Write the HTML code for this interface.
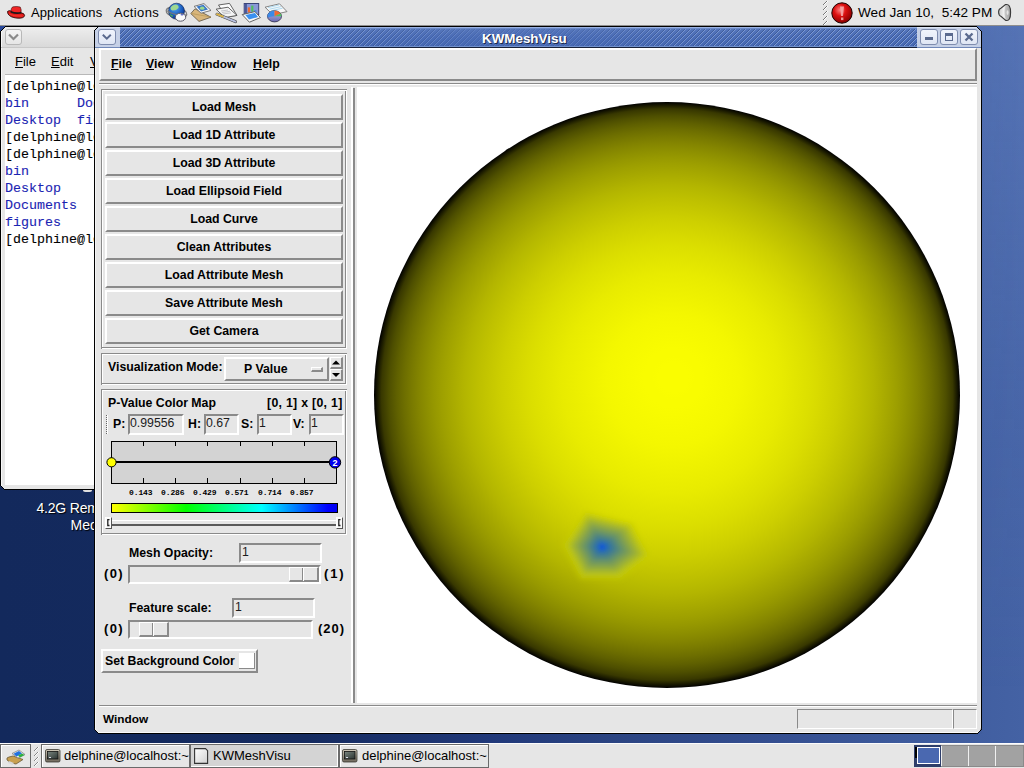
<!DOCTYPE html>
<html><head><meta charset="utf-8">
<style>
*{box-sizing:border-box;margin:0;padding:0}
html,body{width:1024px;height:768px;overflow:hidden}
body{position:relative;font-family:"Liberation Sans",sans-serif;background:#13295c}
.a{position:absolute}
.t{position:absolute;white-space:nowrap;line-height:1}
</style></head><body>
<div class="a" style="left:0;top:0;width:1024px;height:768px;background:linear-gradient(90deg,#13295c 0%,#152b60 30%,#21397a 48%,#2b4482 60%,#344e90 75%,#3d5a9c 88%,#4462a4 100%)"></div>
<div class="a" style="left:0;top:0;width:1024px;height:768px;background:linear-gradient(180deg,rgba(120,150,215,0.35) 0%,rgba(110,140,210,0.12) 50%,rgba(0,0,40,0.0) 90%);-webkit-mask-image:linear-gradient(90deg,transparent 45%,#000 100%);mask-image:linear-gradient(90deg,transparent 45%,#000 100%)"></div>
<div class="t" style="left:36.5px;top:499.5px;font:normal 14px 'Liberation Sans',sans-serif;color:#fff;text-shadow:1px 1px 1px #000;letter-spacing:-0.2px">4.2G Removable</div>
<div class="t" style="left:70.5px;top:516.5px;font:normal 14px 'Liberation Sans',sans-serif;color:#fff;text-shadow:1px 1px 1px #000;letter-spacing:0px">Media</div>
<div class="a" style="left:83px;top:489px;width:9px;height:3px;border-radius:50%;background:#e0e0e0"></div>
<div class="a" style="left:0px;top:26px;width:221px;height:464px;background:#e6e6e6;border:1px solid #000"></div>
<div class="a" style="left:1px;top:27px;width:220px;height:20px;background:linear-gradient(#eeeeee,#d9d9d9)"></div>
<div class="a" style="left:1px;top:27px;width:1px;height:462px;background:#f8f8f8"></div>
<div class="a" style="left:1px;top:47px;width:220px;height:1px;background:#c8c8c8"></div>
<div class="a" style="left:5px;top:29px;width:17px;height:16px;border:1px solid #b8b8b8;border-radius:3px;background:linear-gradient(#f4f4f4,#e6e6e6)"></div>
<svg class="a" style="left:8px;top:33px" width="11" height="8"><path d="M1 1.5 L5.5 6 L10 1.5" stroke="#8a8a8a" stroke-width="2.2" fill="none"/></svg>
<div class="t" style="left:15px;top:54px;font:normal 13px 'Liberation Sans',sans-serif;color:#000;"><u>F</u>ile</div>
<div class="t" style="left:51px;top:54px;font:normal 13px 'Liberation Sans',sans-serif;color:#000;"><u>E</u>dit</div>
<div class="t" style="left:90px;top:54px;font:normal 13px 'Liberation Sans',sans-serif;color:#000;"><u>V</u>iew</div>
<div class="a" style="left:5px;top:74px;width:216px;height:1px;background:#b8b8b8"></div>
<div class="a" style="left:0px;top:26px;width:1px;height:1px;background:#28489a"></div><div class="a" style="left:1px;top:26px;width:1px;height:1px;background:#28489a"></div><div class="a" style="left:2px;top:26px;width:1px;height:1px;background:#28489a"></div><div class="a" style="left:3px;top:26px;width:1px;height:1px;background:#28489a"></div><div class="a" style="left:4px;top:26px;width:1px;height:1px;background:#28489a"></div><div class="a" style="left:5px;top:26px;width:1px;height:1px;background:#000"></div><div class="a" style="left:0px;top:27px;width:1px;height:1px;background:#28489a"></div><div class="a" style="left:1px;top:27px;width:1px;height:1px;background:#28489a"></div><div class="a" style="left:2px;top:27px;width:1px;height:1px;background:#28489a"></div><div class="a" style="left:3px;top:27px;width:1px;height:1px;background:#28489a"></div><div class="a" style="left:4px;top:27px;width:1px;height:1px;background:#000"></div><div class="a" style="left:0px;top:28px;width:1px;height:1px;background:#28489a"></div><div class="a" style="left:1px;top:28px;width:1px;height:1px;background:#28489a"></div><div class="a" style="left:2px;top:28px;width:1px;height:1px;background:#28489a"></div><div class="a" style="left:3px;top:28px;width:1px;height:1px;background:#000"></div><div class="a" style="left:0px;top:29px;width:1px;height:1px;background:#28489a"></div><div class="a" style="left:1px;top:29px;width:1px;height:1px;background:#28489a"></div><div class="a" style="left:2px;top:29px;width:1px;height:1px;background:#000"></div><div class="a" style="left:0px;top:30px;width:1px;height:1px;background:#28489a"></div><div class="a" style="left:1px;top:30px;width:1px;height:1px;background:#000"></div><div class="a" style="left:0px;top:31px;width:1px;height:1px;background:#000"></div>
<div class="a" style="left:0px;top:489px;width:1px;height:1px;background:#13295c"></div><div class="a" style="left:1px;top:489px;width:1px;height:1px;background:#13295c"></div><div class="a" style="left:2px;top:489px;width:1px;height:1px;background:#13295c"></div><div class="a" style="left:3px;top:489px;width:1px;height:1px;background:#13295c"></div><div class="a" style="left:4px;top:489px;width:1px;height:1px;background:#000"></div><div class="a" style="left:0px;top:488px;width:1px;height:1px;background:#13295c"></div><div class="a" style="left:1px;top:488px;width:1px;height:1px;background:#13295c"></div><div class="a" style="left:2px;top:488px;width:1px;height:1px;background:#13295c"></div><div class="a" style="left:3px;top:488px;width:1px;height:1px;background:#000"></div><div class="a" style="left:0px;top:487px;width:1px;height:1px;background:#13295c"></div><div class="a" style="left:1px;top:487px;width:1px;height:1px;background:#13295c"></div><div class="a" style="left:2px;top:487px;width:1px;height:1px;background:#000"></div><div class="a" style="left:0px;top:486px;width:1px;height:1px;background:#13295c"></div><div class="a" style="left:1px;top:486px;width:1px;height:1px;background:#000"></div><div class="a" style="left:0px;top:485px;width:1px;height:1px;background:#000"></div>
<div class="a" style="left:5px;top:75px;width:216px;height:410px;background:#fff"></div>
<div class="a" style="left:5px;top:78px;font:13.33px 'Liberation Mono',monospace;line-height:17px;color:#000;white-space:pre;-webkit-text-stroke:0.1px currentColor">[delphine@localhost ~]$ ls
<span style="color:#1a24b2">bin</span>      <span style="color:#1a24b2">Documents</span>
<span style="color:#1a24b2">Desktop</span>  <span style="color:#1a24b2">figures</span>
[delphine@localhost ~]$ clear
[delphine@localhost ~]$ ls -1
<span style="color:#1a24b2">bin</span>
<span style="color:#1a24b2">Desktop</span>
<span style="color:#1a24b2">Documents</span>
<span style="color:#1a24b2">figures</span>
[delphine@localhost ~]$ </div>
<div class="a" style="left:94px;top:26px;width:888px;height:708px;background:#e6e6e6;border:1px solid #000;border-radius:6px 6px 6px 6px"></div>
<div class="a" style="left:95px;top:27px;width:886px;height:706px;border-left:1px solid #f4f4f4;border-radius:5px 5px 4px 4px;border-bottom:1px solid #fafafa"></div>
<div class="a" style="left:95px;top:27px;width:886px;height:21px;background:linear-gradient(#5878bc,#4a6cb6 50%,#4668b2);border-radius:5px 5px 0 0;overflow:hidden"></div>
<svg class="a" style="left:120px;top:29px" width="797" height="17" shape-rendering="crispEdges"><defs><pattern id="st" width="5" height="5" patternUnits="userSpaceOnUse"><rect x="4" y="0" width="1" height="1" fill="#3b5896"/><rect x="3" y="1" width="1" height="1" fill="#3b5896"/><rect x="2" y="2" width="1" height="1" fill="#3b5896"/><rect x="1" y="3" width="1" height="1" fill="#3b5896"/><rect x="0" y="4" width="1" height="1" fill="#3b5896"/><rect x="0" y="0" width="1" height="1" fill="#7f9cd6"/><rect x="4" y="1" width="1" height="1" fill="#7f9cd6"/><rect x="3" y="2" width="1" height="1" fill="#7f9cd6"/><rect x="2" y="3" width="1" height="1" fill="#7f9cd6"/><rect x="1" y="4" width="1" height="1" fill="#7f9cd6"/></pattern><linearGradient id="stm" x1="0" x2="1" y1="0" y2="0"><stop offset="0" stop-color="#fff" stop-opacity="1"/><stop offset="0.3" stop-color="#fff" stop-opacity="0.8"/><stop offset="0.45" stop-color="#fff" stop-opacity="0.3"/><stop offset="0.55" stop-color="#fff" stop-opacity="0.3"/><stop offset="0.7" stop-color="#fff" stop-opacity="0.8"/><stop offset="1" stop-color="#fff" stop-opacity="1"/></linearGradient><mask id="mk"><rect width="797" height="18" fill="url(#stm)"/></mask></defs><rect width="797" height="18" fill="url(#st)" mask="url(#mk)"/></svg>
<div class="a" style="left:95px;top:27px;width:886px;height:1px;background:#9ab2e4;border-radius:5px 5px 0 0"></div>
<div class="a" style="left:95px;top:28px;width:886px;height:1px;background:#6a8ac8"></div>
<div class="a" style="left:120px;top:46px;width:797px;height:1px;background:#7090cc"></div>
<div class="a" style="left:95px;top:47px;width:886px;height:1px;background:#18223a"></div>
<div class="a" style="left:95px;top:27px;width:25px;height:20px;background:#c5d0e6;border-radius:5px 0 0 0;border-top:1px solid #dde6f6"></div>
<div class="a" style="left:95px;top:47px;width:25px;height:1px;background:#7088b8"></div>
<div class="a" style="left:98px;top:29px;width:18px;height:16px;border:1px solid #7e8cae;border-radius:3px;background:linear-gradient(#f0f4fc,#dfe6f4)"></div>
<svg class="a" style="left:101px;top:33px" width="12" height="8"><path d="M1.8 1.8 L5.8 5.6 L9.8 1.8" stroke="#5a6a8e" stroke-width="2" fill="none"/></svg>
<div class="a" style="left:917px;top:27px;width:64px;height:20px;background:#c5d0e6;border-radius:0 5px 0 0;border-top:1px solid #dde6f6"></div>
<div class="a" style="left:917px;top:47px;width:64px;height:1px;background:#7088b8"></div>
<div class="a" style="left:920px;top:29px;width:18px;height:16px;border:1px solid #7e8cae;border-radius:3px;background:linear-gradient(#f0f4fc,#dfe6f4)"></div>
<div class="a" style="left:940px;top:29px;width:18px;height:16px;border:1px solid #7e8cae;border-radius:3px;background:linear-gradient(#f0f4fc,#dfe6f4)"></div>
<div class="a" style="left:960px;top:29px;width:18px;height:16px;border:1px solid #7e8cae;border-radius:3px;background:linear-gradient(#f0f4fc,#dfe6f4)"></div>
<div class="a" style="left:925px;top:37px;width:8px;height:3px;background:#5a6a8e"></div>
<div class="a" style="left:945px;top:33px;width:8px;height:8px;border:1px solid #5a6a8e;border-top:3px solid #5a6a8e"></div>
<svg class="a" style="left:964px;top:32px" width="10" height="10"><path d="M1.5 1.5 L8.5 8.5 M8.5 1.5 L1.5 8.5" stroke="#5a6a8e" stroke-width="2.3" fill="none"/></svg>
<div class="t" style="left:482px;top:31px;font:bold 13.4px 'Liberation Sans',sans-serif;color:#fff;text-shadow:1px 1px 0 #1e2a48">KWMeshVisu</div>
<div class="a" style="left:94px;top:26px;width:1px;height:1px;background:#000"></div><div class="a" style="left:95px;top:26px;width:1px;height:1px;background:#000"></div><div class="a" style="left:96px;top:26px;width:1px;height:1px;background:#000"></div><div class="a" style="left:97px;top:26px;width:1px;height:1px;background:#000"></div><div class="a" style="left:98px;top:26px;width:1px;height:1px;background:#000"></div><div class="a" style="left:94px;top:27px;width:1px;height:1px;background:#e6e6e6"></div><div class="a" style="left:95px;top:27px;width:1px;height:1px;background:#e6e6e6"></div><div class="a" style="left:96px;top:27px;width:1px;height:1px;background:#e6e6e6"></div><div class="a" style="left:97px;top:27px;width:1px;height:1px;background:#000"></div><div class="a" style="left:94px;top:28px;width:1px;height:1px;background:#e6e6e6"></div><div class="a" style="left:95px;top:28px;width:1px;height:1px;background:#e6e6e6"></div><div class="a" style="left:96px;top:28px;width:1px;height:1px;background:#000"></div><div class="a" style="left:94px;top:29px;width:1px;height:1px;background:#e6e6e6"></div><div class="a" style="left:95px;top:29px;width:1px;height:1px;background:#000"></div><div class="a" style="left:94px;top:30px;width:1px;height:1px;background:#000"></div>
<div class="a" style="left:981px;top:26px;width:1px;height:1px;background:#5070b1"></div><div class="a" style="left:980px;top:26px;width:1px;height:1px;background:#5070b1"></div><div class="a" style="left:979px;top:26px;width:1px;height:1px;background:#5070b1"></div><div class="a" style="left:978px;top:26px;width:1px;height:1px;background:#5070b1"></div><div class="a" style="left:977px;top:26px;width:1px;height:1px;background:#5070b1"></div><div class="a" style="left:976px;top:26px;width:1px;height:1px;background:#000"></div><div class="a" style="left:981px;top:27px;width:1px;height:1px;background:#5070b1"></div><div class="a" style="left:980px;top:27px;width:1px;height:1px;background:#5070b1"></div><div class="a" style="left:979px;top:27px;width:1px;height:1px;background:#5070b1"></div><div class="a" style="left:978px;top:27px;width:1px;height:1px;background:#5070b1"></div><div class="a" style="left:977px;top:27px;width:1px;height:1px;background:#000"></div><div class="a" style="left:981px;top:28px;width:1px;height:1px;background:#5070b1"></div><div class="a" style="left:980px;top:28px;width:1px;height:1px;background:#5070b1"></div><div class="a" style="left:979px;top:28px;width:1px;height:1px;background:#5070b1"></div><div class="a" style="left:978px;top:28px;width:1px;height:1px;background:#000"></div><div class="a" style="left:981px;top:29px;width:1px;height:1px;background:#5070b1"></div><div class="a" style="left:980px;top:29px;width:1px;height:1px;background:#5070b1"></div><div class="a" style="left:979px;top:29px;width:1px;height:1px;background:#000"></div><div class="a" style="left:981px;top:30px;width:1px;height:1px;background:#5070b1"></div><div class="a" style="left:980px;top:30px;width:1px;height:1px;background:#000"></div><div class="a" style="left:981px;top:31px;width:1px;height:1px;background:#000"></div>
<div class="a" style="left:94px;top:733px;width:1px;height:1px;background:#13295c"></div><div class="a" style="left:95px;top:733px;width:1px;height:1px;background:#13295c"></div><div class="a" style="left:96px;top:733px;width:1px;height:1px;background:#13295c"></div><div class="a" style="left:97px;top:733px;width:1px;height:1px;background:#13295c"></div><div class="a" style="left:98px;top:733px;width:1px;height:1px;background:#000"></div><div class="a" style="left:94px;top:732px;width:1px;height:1px;background:#13295c"></div><div class="a" style="left:95px;top:732px;width:1px;height:1px;background:#13295c"></div><div class="a" style="left:96px;top:732px;width:1px;height:1px;background:#13295c"></div><div class="a" style="left:97px;top:732px;width:1px;height:1px;background:#000"></div><div class="a" style="left:94px;top:731px;width:1px;height:1px;background:#13295c"></div><div class="a" style="left:95px;top:731px;width:1px;height:1px;background:#13295c"></div><div class="a" style="left:96px;top:731px;width:1px;height:1px;background:#000"></div><div class="a" style="left:94px;top:730px;width:1px;height:1px;background:#13295c"></div><div class="a" style="left:95px;top:730px;width:1px;height:1px;background:#000"></div><div class="a" style="left:94px;top:729px;width:1px;height:1px;background:#000"></div>
<div class="a" style="left:981px;top:733px;width:1px;height:1px;background:#405d9e"></div><div class="a" style="left:980px;top:733px;width:1px;height:1px;background:#405d9e"></div><div class="a" style="left:979px;top:733px;width:1px;height:1px;background:#405d9e"></div><div class="a" style="left:978px;top:733px;width:1px;height:1px;background:#405d9e"></div><div class="a" style="left:977px;top:733px;width:1px;height:1px;background:#000"></div><div class="a" style="left:981px;top:732px;width:1px;height:1px;background:#405d9e"></div><div class="a" style="left:980px;top:732px;width:1px;height:1px;background:#405d9e"></div><div class="a" style="left:979px;top:732px;width:1px;height:1px;background:#405d9e"></div><div class="a" style="left:978px;top:732px;width:1px;height:1px;background:#000"></div><div class="a" style="left:981px;top:731px;width:1px;height:1px;background:#405d9e"></div><div class="a" style="left:980px;top:731px;width:1px;height:1px;background:#405d9e"></div><div class="a" style="left:979px;top:731px;width:1px;height:1px;background:#000"></div><div class="a" style="left:981px;top:730px;width:1px;height:1px;background:#405d9e"></div><div class="a" style="left:980px;top:730px;width:1px;height:1px;background:#000"></div><div class="a" style="left:981px;top:729px;width:1px;height:1px;background:#000"></div>
<div class="a" style="left:99px;top:48px;width:878px;height:33px;border-style:solid;border-width:2px;border-color:#ffffff #8a8a8a #8a8a8a #ffffff"></div>
<div class="t" style="left:111px;top:57px;font:bold 12.3px 'Liberation Sans',sans-serif;color:#000;"><u>F</u>ile</div>
<div class="t" style="left:146px;top:57px;font:bold 12.3px 'Liberation Sans',sans-serif;color:#000;"><u>V</u>iew</div>
<div class="t" style="left:191px;top:57px;font:bold 11.8px 'Liberation Sans',sans-serif;color:#000;"><u>W</u>indow</div>
<div class="t" style="left:253px;top:57px;font:bold 12.3px 'Liberation Sans',sans-serif;color:#000;"><u>H</u>elp</div>
<div class="a" style="left:99px;top:83px;width:878px;height:1px;background:#8a8a8a"></div>
<div class="a" style="left:99px;top:84px;width:878px;height:1px;background:#ffffff"></div>
<div class="a" style="left:101px;top:89px;width:246px;height:1px;background:#8a8a8a"></div>
<div class="a" style="left:101px;top:89px;width:1px;height:260px;background:#8a8a8a"></div>
<div class="a" style="left:102px;top:90px;width:244px;height:1px;background:#ffffff"></div>
<div class="a" style="left:102px;top:90px;width:1px;height:258px;background:#ffffff"></div>
<div class="a" style="left:345px;top:91px;width:1px;height:257px;background:#8a8a8a"></div>
<div class="a" style="left:102px;top:347px;width:244px;height:1px;background:#8a8a8a"></div>
<div class="a" style="left:346px;top:90px;width:1px;height:259px;background:#ffffff"></div>
<div class="a" style="left:102px;top:348px;width:245px;height:1px;background:#ffffff"></div>
<div class="a" style="left:105px;top:94px;width:238px;height:26px;background:#e6e6e6;border-style:solid;border-width:2px;border-color:#ffffff #8a8a8a #8a8a8a #ffffff;"></div>
<div class="t" style="left:105px;top:100px;width:238px;text-align:center;font:bold 12.3px 'Liberation Sans',sans-serif;color:#000">Load Mesh</div>
<div class="a" style="left:105px;top:122px;width:238px;height:26px;background:#e6e6e6;border-style:solid;border-width:2px;border-color:#ffffff #8a8a8a #8a8a8a #ffffff;"></div>
<div class="t" style="left:105px;top:128px;width:238px;text-align:center;font:bold 12.3px 'Liberation Sans',sans-serif;color:#000">Load 1D Attribute</div>
<div class="a" style="left:105px;top:150px;width:238px;height:26px;background:#e6e6e6;border-style:solid;border-width:2px;border-color:#ffffff #8a8a8a #8a8a8a #ffffff;"></div>
<div class="t" style="left:105px;top:156px;width:238px;text-align:center;font:bold 12.3px 'Liberation Sans',sans-serif;color:#000">Load 3D Attribute</div>
<div class="a" style="left:105px;top:178px;width:238px;height:26px;background:#e6e6e6;border-style:solid;border-width:2px;border-color:#ffffff #8a8a8a #8a8a8a #ffffff;"></div>
<div class="t" style="left:105px;top:184px;width:238px;text-align:center;font:bold 12.3px 'Liberation Sans',sans-serif;color:#000">Load Ellipsoid Field</div>
<div class="a" style="left:105px;top:206px;width:238px;height:26px;background:#e6e6e6;border-style:solid;border-width:2px;border-color:#ffffff #8a8a8a #8a8a8a #ffffff;"></div>
<div class="t" style="left:105px;top:212px;width:238px;text-align:center;font:bold 12.3px 'Liberation Sans',sans-serif;color:#000">Load Curve</div>
<div class="a" style="left:105px;top:234px;width:238px;height:26px;background:#e6e6e6;border-style:solid;border-width:2px;border-color:#ffffff #8a8a8a #8a8a8a #ffffff;"></div>
<div class="t" style="left:105px;top:240px;width:238px;text-align:center;font:bold 12.3px 'Liberation Sans',sans-serif;color:#000">Clean Attributes</div>
<div class="a" style="left:105px;top:262px;width:238px;height:26px;background:#e6e6e6;border-style:solid;border-width:2px;border-color:#ffffff #8a8a8a #8a8a8a #ffffff;"></div>
<div class="t" style="left:105px;top:268px;width:238px;text-align:center;font:bold 12.3px 'Liberation Sans',sans-serif;color:#000">Load Attribute Mesh</div>
<div class="a" style="left:105px;top:290px;width:238px;height:26px;background:#e6e6e6;border-style:solid;border-width:2px;border-color:#ffffff #8a8a8a #8a8a8a #ffffff;"></div>
<div class="t" style="left:105px;top:296px;width:238px;text-align:center;font:bold 12.3px 'Liberation Sans',sans-serif;color:#000">Save Attribute Mesh</div>
<div class="a" style="left:105px;top:318px;width:238px;height:26px;background:#e6e6e6;border-style:solid;border-width:2px;border-color:#ffffff #8a8a8a #8a8a8a #ffffff;"></div>
<div class="t" style="left:105px;top:324px;width:238px;text-align:center;font:bold 12.3px 'Liberation Sans',sans-serif;color:#000">Get Camera</div>
<div class="a" style="left:101px;top:353px;width:246px;height:1px;background:#8a8a8a"></div>
<div class="a" style="left:101px;top:353px;width:1px;height:32px;background:#8a8a8a"></div>
<div class="a" style="left:102px;top:354px;width:244px;height:1px;background:#ffffff"></div>
<div class="a" style="left:102px;top:354px;width:1px;height:30px;background:#ffffff"></div>
<div class="a" style="left:345px;top:355px;width:1px;height:29px;background:#8a8a8a"></div>
<div class="a" style="left:102px;top:383px;width:244px;height:1px;background:#8a8a8a"></div>
<div class="a" style="left:346px;top:354px;width:1px;height:31px;background:#ffffff"></div>
<div class="a" style="left:102px;top:384px;width:245px;height:1px;background:#ffffff"></div>
<div class="t" style="left:108px;top:360px;font:bold 12.3px 'Liberation Sans',sans-serif;color:#000;">Visualization Mode:</div>
<div class="a" style="left:224px;top:357px;width:105px;height:24px;background:#e6e6e6;border-style:solid;border-width:2px;border-color:#ffffff #8a8a8a #8a8a8a #ffffff;"></div>
<div class="t" style="left:244px;top:362px;font:bold 12.3px 'Liberation Sans',sans-serif;color:#000;">P Value</div>
<div class="a" style="left:311px;top:367px;width:12px;height:5px;background:#e6e6e6;border-style:solid;border-width:1px 2px 2px 1px;border-color:#ffffff #8a8a8a #8a8a8a #ffffff"></div>
<div class="a" style="left:330px;top:357px;width:13px;height:12px;background:#e6e6e6;border-style:solid;border-width:1px 2px 2px 1px;border-color:#ffffff #8a8a8a #8a8a8a #ffffff"></div>
<div class="a" style="left:330px;top:369px;width:13px;height:12px;background:#e6e6e6;border-style:solid;border-width:1px 2px 2px 1px;border-color:#ffffff #8a8a8a #8a8a8a #ffffff"></div>
<svg class="a" style="left:330px;top:357px" width="14" height="24"><path d="M2 7.5 L6 3.5 L10 7.5Z M2 16 L10 16 L6 20Z" fill="#000"/></svg>
<div class="a" style="left:101px;top:389px;width:246px;height:1px;background:#8a8a8a"></div>
<div class="a" style="left:101px;top:389px;width:1px;height:146px;background:#8a8a8a"></div>
<div class="a" style="left:102px;top:390px;width:244px;height:1px;background:#ffffff"></div>
<div class="a" style="left:102px;top:390px;width:1px;height:144px;background:#ffffff"></div>
<div class="a" style="left:345px;top:391px;width:1px;height:143px;background:#8a8a8a"></div>
<div class="a" style="left:102px;top:533px;width:244px;height:1px;background:#8a8a8a"></div>
<div class="a" style="left:346px;top:390px;width:1px;height:145px;background:#ffffff"></div>
<div class="a" style="left:102px;top:534px;width:245px;height:1px;background:#ffffff"></div>
<div class="t" style="left:108px;top:396px;font:bold 12.3px 'Liberation Sans',sans-serif;color:#000;">P-Value Color Map</div>
<div class="t" style="left:267px;top:396px;font:bold 12.3px 'Liberation Sans',sans-serif;color:#000;letter-spacing:0.3px">[0, 1] x [0, 1]</div>
<div class="a" style="left:106px;top:415px;width:2px;height:19px;border-left:1px dotted #666;border-right:1px solid #fff"></div>
<div class="t" style="left:113px;top:417px;font:bold 12.3px 'Liberation Sans',sans-serif;color:#000;">P:</div>
<div class="a" style="left:128px;top:414px;width:56px;height:21px;background:#e6e6e6;border-style:solid;border-width:2px;border-color:#8a8a8a #ffffff #ffffff #8a8a8a;"></div>
<div class="t" style="left:130px;top:416px;font:normal 12.3px 'Liberation Sans',sans-serif;color:#1c1c1c;">0.99556</div>
<div class="t" style="left:188px;top:417px;font:bold 12.3px 'Liberation Sans',sans-serif;color:#000;">H:</div>
<div class="a" style="left:204px;top:414px;width:35px;height:21px;background:#e6e6e6;border-style:solid;border-width:2px;border-color:#8a8a8a #ffffff #ffffff #8a8a8a;"></div>
<div class="t" style="left:206px;top:416px;font:normal 12.3px 'Liberation Sans',sans-serif;color:#1c1c1c;">0.67</div>
<div class="t" style="left:241px;top:417px;font:bold 12.3px 'Liberation Sans',sans-serif;color:#000;">S:</div>
<div class="a" style="left:257px;top:414px;width:35px;height:21px;background:#e6e6e6;border-style:solid;border-width:2px;border-color:#8a8a8a #ffffff #ffffff #8a8a8a;"></div>
<div class="t" style="left:259px;top:416px;font:normal 12.3px 'Liberation Sans',sans-serif;color:#1c1c1c;">1</div>
<div class="t" style="left:293px;top:417px;font:bold 12.3px 'Liberation Sans',sans-serif;color:#000;">V:</div>
<div class="a" style="left:309px;top:414px;width:35px;height:21px;background:#e6e6e6;border-style:solid;border-width:2px;border-color:#8a8a8a #ffffff #ffffff #8a8a8a;"></div>
<div class="t" style="left:311px;top:416px;font:normal 12.3px 'Liberation Sans',sans-serif;color:#1c1c1c;">1</div>
<div class="a" style="left:111px;top:441px;width:226px;height:43px;background:#d3d3d3;border:1px solid #000"></div>
<svg class="a" style="left:111px;top:441px" width="240" height="45"><path d="M32.5 1 V5 M32.5 37 V42 M64.5 1 V5 M64.5 37 V42 M96.5 1 V5 M96.5 37 V42 M129.5 1 V5 M129.5 37 V42 M161.5 1 V5 M161.5 37 V42 M193.5 1 V5 M193.5 37 V42 " stroke="#000" stroke-width="1"/><path d="M0 21 H225" stroke="#000" stroke-width="2.2"/></svg>
<svg class="a" style="left:100px;top:450px" width="250" height="26"><circle cx="11.5" cy="12.3" r="4.6" fill="#ffff00" stroke="#000" stroke-width="1"/><circle cx="235" cy="12.4" r="5.7" fill="#0000ee" stroke="#000" stroke-width="1"/><text x="235" y="16" font-family="Liberation Sans" font-weight="bold" font-size="9" fill="#fff" text-anchor="middle">2</text></svg>
<div class="t" style="left:129px;top:488px;font:bold 8px 'Liberation Mono',sans-serif;color:#000;letter-spacing:-0.1px">0.143</div>
<div class="t" style="left:161px;top:488px;font:bold 8px 'Liberation Mono',sans-serif;color:#000;letter-spacing:-0.1px">0.286</div>
<div class="t" style="left:193px;top:488px;font:bold 8px 'Liberation Mono',sans-serif;color:#000;letter-spacing:-0.1px">0.429</div>
<div class="t" style="left:225px;top:488px;font:bold 8px 'Liberation Mono',sans-serif;color:#000;letter-spacing:-0.1px">0.571</div>
<div class="t" style="left:258px;top:488px;font:bold 8px 'Liberation Mono',sans-serif;color:#000;letter-spacing:-0.1px">0.714</div>
<div class="t" style="left:290px;top:488px;font:bold 8px 'Liberation Mono',sans-serif;color:#000;letter-spacing:-0.1px">0.857</div>
<div class="a" style="left:111px;top:503px;width:227px;height:10px;border:1px solid #000;background:linear-gradient(90deg,#ffff00 0%,#00ff00 33%,#00ffff 66.5%,#0000ff 96%,#0000f0 100%)"></div>
<div class="a" style="left:112px;top:520px;width:224px;height:1px;background:#fff"></div>
<div class="a" style="left:112px;top:524px;width:224px;height:2px;background:#5a5a5a"></div>
<div class="a" style="left:105px;top:517px;width:7px;height:12px;background:#fafafa;border-style:solid;border-width:1px;border-color:#fff #555 #555 #fff"></div>
<svg class="a" style="left:107px;top:519px" width="3" height="8"><path d="M2.5 0.5 H0.8 V6.5 H2.5" stroke="#222" stroke-width="1.3" fill="none"/></svg>
<div class="a" style="left:336px;top:517px;width:7px;height:12px;background:#fafafa;border-style:solid;border-width:1px;border-color:#fff #555 #555 #fff"></div>
<svg class="a" style="left:338px;top:519px" width="3" height="8"><path d="M2.5 0.5 H0.8 V6.5 H2.5" stroke="#222" stroke-width="1.3" fill="none"/></svg>
<div class="t" style="left:129px;top:546px;font:bold 12.3px 'Liberation Sans',sans-serif;color:#000;">Mesh Opacity:</div>
<div class="a" style="left:239px;top:543px;width:83px;height:20px;background:#e6e6e6;border-style:solid;border-width:2px;border-color:#8a8a8a #ffffff #ffffff #8a8a8a;"></div>
<div class="t" style="left:242px;top:545px;font:normal 12.3px 'Liberation Sans',sans-serif;color:#1c1c1c;">1</div>
<div class="t" style="left:104px;top:566px;font:bold 13px 'Liberation Sans',sans-serif;color:#000;letter-spacing:1.4px">(0)</div>
<div class="a" style="left:128px;top:565px;width:193px;height:19px;background:#e6e6e6;border-style:solid;border-width:2px;border-color:#8a8a8a #ffffff #ffffff #8a8a8a;"></div>
<div class="a" style="left:289px;top:567px;width:30px;height:15px;background:#e6e6e6;border-style:solid;border-width:1px 2px 2px 1px;border-color:#ffffff #8a8a8a #8a8a8a #ffffff"></div>
<div class="a" style="left:302px;top:568px;width:1px;height:13px;background:#8a8a8a"></div>
<div class="a" style="left:303px;top:568px;width:1px;height:13px;background:#ffffff"></div>
<div class="t" style="left:324px;top:566px;font:bold 13px 'Liberation Sans',sans-serif;color:#000;letter-spacing:1.8px">(1)</div>
<div class="t" style="left:129px;top:601px;font:bold 12.3px 'Liberation Sans',sans-serif;color:#000;">Feature scale:</div>
<div class="a" style="left:232px;top:598px;width:83px;height:20px;background:#e6e6e6;border-style:solid;border-width:2px;border-color:#8a8a8a #ffffff #ffffff #8a8a8a;"></div>
<div class="t" style="left:235px;top:600px;font:normal 12.3px 'Liberation Sans',sans-serif;color:#1c1c1c;">1</div>
<div class="t" style="left:104px;top:621px;font:bold 13px 'Liberation Sans',sans-serif;color:#000;letter-spacing:1.4px">(0)</div>
<div class="a" style="left:128px;top:620px;width:185px;height:19px;background:#e6e6e6;border-style:solid;border-width:2px;border-color:#8a8a8a #ffffff #ffffff #8a8a8a;"></div>
<div class="a" style="left:139px;top:622px;width:30px;height:15px;background:#e6e6e6;border-style:solid;border-width:1px 2px 2px 1px;border-color:#ffffff #8a8a8a #8a8a8a #ffffff"></div>
<div class="a" style="left:152px;top:623px;width:1px;height:13px;background:#8a8a8a"></div>
<div class="a" style="left:153px;top:623px;width:1px;height:13px;background:#ffffff"></div>
<div class="t" style="left:318px;top:621px;font:bold 13px 'Liberation Sans',sans-serif;color:#000;letter-spacing:1px">(20)</div>
<div class="a" style="left:101px;top:649px;width:157px;height:24px;background:#e6e6e6;border-style:solid;border-width:2px;border-color:#ffffff #8a8a8a #8a8a8a #ffffff;"></div>
<div class="t" style="left:105px;top:654px;font:bold 12.3px 'Liberation Sans',sans-serif;color:#000;">Set Background Color</div>
<div class="a" style="left:239px;top:653px;width:16px;height:16px;background:#fff;border-right:1px solid #8a8a8a;border-bottom:1px solid #8a8a8a"></div>
<div class="a" style="left:351px;top:87px;width:2px;height:616px;background:#ffffff"></div>
<div class="a" style="left:353px;top:88px;width:2px;height:615px;background:#8a8a8a"></div>
<div class="a" style="left:357px;top:87px;width:620px;height:616px;background:#fff"></div>
<div class="a" style="left:355px;top:85px;width:622px;height:2px;background:#e8e8e8"></div>
<svg class="a" style="left:374px;top:102px" width="586" height="586"><defs><radialGradient id="sph" cx="0.5" cy="0.5" r="0.5" fx="0.512" fy="0.468"><stop offset="0.000" stop-color="#fafd00"/><stop offset="0.025" stop-color="#fafd00"/><stop offset="0.050" stop-color="#fafd00"/><stop offset="0.075" stop-color="#f9fc00"/><stop offset="0.100" stop-color="#f9fc00"/><stop offset="0.125" stop-color="#f8fb00"/><stop offset="0.150" stop-color="#f7fa00"/><stop offset="0.175" stop-color="#f6f900"/><stop offset="0.200" stop-color="#f5f800"/><stop offset="0.225" stop-color="#f4f700"/><stop offset="0.250" stop-color="#f2f500"/><stop offset="0.275" stop-color="#f0f300"/><stop offset="0.300" stop-color="#eef100"/><stop offset="0.325" stop-color="#ecef00"/><stop offset="0.350" stop-color="#eaed00"/><stop offset="0.375" stop-color="#e8eb00"/><stop offset="0.400" stop-color="#e5e800"/><stop offset="0.425" stop-color="#e2e500"/><stop offset="0.450" stop-color="#dfe200"/><stop offset="0.475" stop-color="#dcdf00"/><stop offset="0.500" stop-color="#d9db00"/><stop offset="0.525" stop-color="#d5d700"/><stop offset="0.550" stop-color="#d1d300"/><stop offset="0.575" stop-color="#cdcf00"/><stop offset="0.600" stop-color="#c8ca00"/><stop offset="0.625" stop-color="#c3c500"/><stop offset="0.650" stop-color="#bec000"/><stop offset="0.675" stop-color="#b8bb00"/><stop offset="0.700" stop-color="#b3b500"/><stop offset="0.725" stop-color="#acae00"/><stop offset="0.750" stop-color="#a5a700"/><stop offset="0.775" stop-color="#9ea000"/><stop offset="0.800" stop-color="#969800"/><stop offset="0.825" stop-color="#8d8f00"/><stop offset="0.850" stop-color="#848500"/><stop offset="0.875" stop-color="#797a00"/><stop offset="0.900" stop-color="#6d6e00"/><stop offset="0.925" stop-color="#5f6000"/><stop offset="0.950" stop-color="#4e4f00"/><stop offset="0.975" stop-color="#383800"/><stop offset="1.000" stop-color="#000000"/></radialGradient></defs><circle cx="293" cy="293" r="293" fill="url(#sph)"/></svg>
<svg class="a" style="left:551.5px;top:496.5px" width="100" height="100" style="overflow:visible"><defs><filter id="bl" x="-20%" y="-20%" width="140%" height="140%"><feGaussianBlur stdDeviation="2.5"/></filter></defs><g filter="url(#bl)"><polygon points="32.6,13.7 81.1,25.5 99.5,59.2 68.8,82.6 28.0,82.6 9.7,47.9" fill="rgb(200, 206, 10)" fill-opacity="0.45"/><polygon points="34.1,16.7 78.5,27.5 95.4,58.4 67.2,79.9 29.9,79.9 13.0,48.0" fill="rgb(192, 200, 18)" fill-opacity="0.8"/><polygon points="35.5,19.8 75.9,29.6 91.3,57.7 65.7,77.2 31.7,77.2 16.4,48.2" fill="rgb(175, 189, 34)" fill-opacity="1"/><polygon points="37.0,22.8 73.4,31.6 87.1,56.9 64.1,74.4 33.5,74.4 19.8,48.4" fill="rgb(158, 178, 50)" fill-opacity="1"/><polygon points="38.4,25.8 70.8,33.6 83.0,56.1 62.5,71.7 35.4,71.7 23.1,48.6" fill="rgb(142, 168, 66)" fill-opacity="1"/><polygon points="39.9,28.8 68.2,35.7 78.9,55.4 61.0,69.0 37.2,69.0 26.5,48.8" fill="rgb(125, 158, 82)" fill-opacity="1"/><polygon points="41.3,31.9 65.6,37.7 74.8,54.6 59.4,66.3 39.0,66.3 29.8,48.9" fill="rgb(108, 150, 97)" fill-opacity="1"/><polygon points="42.8,34.9 63.0,39.8 70.6,53.8 57.8,63.6 40.9,63.6 33.2,49.1" fill="rgb(91, 140, 115)" fill-opacity="1"/><polygon points="44.2,37.9 60.4,41.8 66.5,53.1 56.3,60.9 42.7,60.9 36.6,49.3" fill="rgb(72, 129, 134)" fill-opacity="1"/><polygon points="45.7,40.9 57.8,43.9 62.4,52.3 54.7,58.1 44.5,58.1 39.9,49.5" fill="rgb(53, 119, 154)" fill-opacity="1"/><polygon points="47.1,44.0 55.2,45.9 58.3,51.5 53.1,55.4 46.3,55.4 43.3,49.6" fill="rgb(37, 110, 176)" fill-opacity="1"/><polygon points="48.6,47.0 52.6,48.0 54.1,50.8 51.6,52.7 48.2,52.7 46.6,49.8" fill="rgb(21, 101, 199)" fill-opacity="1"/><circle cx="50" cy="50" r="3" fill="rgb(0,76,228)"/></g></svg>
<div class="a" style="left:99px;top:705px;width:878px;height:1px;background:#8a8a8a"></div>
<div class="a" style="left:99px;top:706px;width:878px;height:1px;background:#ffffff"></div>
<div class="t" style="left:103px;top:712px;font:bold 11.8px 'Liberation Sans',sans-serif;color:#000;">Window</div>
<div class="a" style="left:797px;top:709px;width:156px;height:20px;border-style:solid;border-width:1px;border-color:#8a8a8a #ffffff #ffffff #8a8a8a"></div>
<div class="a" style="left:953px;top:709px;width:24px;height:20px;border-style:solid;border-width:1px;border-color:#8a8a8a #ffffff #ffffff #8a8a8a"></div>
<div class="a" style="left:0px;top:0px;width:1024px;height:25px;background:#e6e6e6"></div>
<div class="a" style="left:0px;top:25px;width:1024px;height:1px;background:#8e8e8e"></div>
<svg class="a" style="left:0px;top:0px" width="30" height="24"><path d="M7.5 11.5 Q8.5 10 12 11.2 L20 12.6 Q24.8 13.2 24.6 15.6 Q24 18.6 17 18.1 Q10 17.4 8 13.8 Z" fill="#e41a1a" stroke="#2a0808" stroke-width="0.9"/><path d="M11 12.6 Q10.8 7.2 13.2 6.8 Q17 6.1 20.2 7 Q21.6 9 21 13.2 Q16 14.2 11 12.6Z" fill="#f02424" stroke="#3a0a0a" stroke-width="0.6"/><path d="M10.8 11.8 Q16 14 21.2 12.6" stroke="#1a1a1a" stroke-width="1.6" fill="none"/><path d="M9 14 Q14 16.5 22 16" stroke="#ff5a3a" stroke-width="0.8" fill="none" opacity="0.6"/></svg>
<div class="t" style="left:31px;top:5px;font:normal 13px 'Liberation Sans',sans-serif;color:#000;letter-spacing:0.1px">Applications</div>
<div class="t" style="left:114px;top:5px;font:normal 13px 'Liberation Sans',sans-serif;color:#000;letter-spacing:0.35px">Actions</div>
<svg class="a" style="left:160px;top:0px" width="135" height="26">
<defs>
<radialGradient id="gl" cx="0.4" cy="0.3" r="0.75"><stop offset="0" stop-color="#5aa8f0"/><stop offset="0.6" stop-color="#1a5ec0"/><stop offset="1" stop-color="#0a2a80"/></radialGradient>
<linearGradient id="pie" x1="0" y1="0" x2="0" y2="1"><stop offset="0" stop-color="#b8b8e8"/><stop offset="1" stop-color="#6a6ab0"/></linearGradient>
</defs>
<ellipse cx="16.5" cy="12.5" rx="10.5" ry="5" transform="rotate(12 16.5 12.5)" fill="none" stroke="#808080" stroke-width="1.3"/>
<circle cx="16.5" cy="11.2" r="8" fill="url(#gl)" stroke="#0a2050" stroke-width="0.6"/>
<path d="M10.5 8 Q12 4.5 16 4.5 Q19 5 18.5 8 Q16.5 10.5 12.5 10.5 Q10.5 10 10.5 8Z" fill="#9ed890"/>
<path d="M9.5 13 Q11 15 13 15.5 L12.5 17 Q10 16 9.5 13Z" fill="#50b050"/>
<path d="M7 10.8 Q16 16.5 26.5 14.8" fill="none" stroke="#7a7a7a" stroke-width="1.3"/>
<ellipse cx="20.5" cy="17.2" rx="5.2" ry="4" fill="#fafafa" stroke="#5a5a6a" stroke-width="1"/>
<ellipse cx="22" cy="14.8" rx="1.5" ry="0.8" fill="#5060c0"/>
<path d="M30.8 13.6 L35 8.8 L51 17.2 L39 21.4Z" fill="#d8b67c" stroke="#6a6050" stroke-width="0.9"/>
<path d="M31.5 13.5 L39.5 15 L51 17" fill="none" stroke="#b89858" stroke-width="0.8"/>
<path d="M34 6.4 L44 3.6 L51 10.4 L41 13.2Z" fill="#f8f8f8" stroke="#6a6a6a" stroke-width="0.9"/>
<path d="M36.5 6.6 L43.5 4.8 L48 9.6 L41 11.4Z" fill="#3a78c8"/>
<ellipse cx="42.2" cy="8.2" rx="2.3" ry="1.6" fill="#9ad890"/>
<path d="M58.5 5 L69.5 3.4 L77 15.4 L66 17Z" fill="#fcfcfc" stroke="#555" stroke-width="0.9"/>
<path d="M56 9.2 L68 7.2 L77 15.4 L65 17.6Z" fill="#f4f4f4" stroke="#555" stroke-width="0.9"/>
<path d="M61 11 L68 10 M62 12.5 L70 11.3 M63 14 L71 12.8" stroke="#b0b0b8" stroke-width="0.7"/>
<path d="M57 14.2 L75.5 21.6" stroke="#444" stroke-width="3" stroke-linecap="round"/>
<path d="M57 14.2 L75.5 21.6" stroke="#b8c0e0" stroke-width="1.8" stroke-linecap="round"/>
<path d="M57 14.2 L63 16.6" stroke="#d8b040" stroke-width="1.8" stroke-linecap="round"/>
<rect x="84.2" y="3.5" width="14.5" height="11" fill="#8a98d8" stroke="#3a4478" stroke-width="1"/>
<rect x="84.7" y="4" width="2.2" height="10" fill="#4a5898"/>
<rect x="87.8" y="7.4" width="2.3" height="5" fill="#f06a30"/>
<rect x="91.2" y="5.6" width="2.2" height="6" fill="#50c060"/>
<rect x="94.4" y="10.2" width="2" height="2.8" fill="#3a8ae0"/>
<path d="M82.2 14.6 L95 11.6 L100.4 17.6 L89.4 22.2Z" fill="#fafafa" stroke="#555" stroke-width="0.9"/>
<path d="M85.4 15 L95 13 L98 17 L89 19.6Z" fill="#3a90f0"/>
<path d="M105 7.2 L119.5 3.8 L127 11.6 L113 14.8Z" fill="#f8f8f8" stroke="#777" stroke-width="0.9"/>
<path d="M108 7.6 L119 5 M109.5 9.2 L121 6.6 M111 10.8 L122.5 8.2" stroke="#a8d8f0" stroke-width="0.9"/>
<ellipse cx="114.5" cy="16.3" rx="7" ry="5.6" fill="url(#pie)" stroke="#2a2a48" stroke-width="0.8"/>
<path d="M114.5 16.3 L114.5 10.7 A7 5.6 0 0 0 107.6 17.5 Q110 16.5 114.5 16.3Z" fill="#3a8ae8"/>
<path d="M114.5 16.3 L114.5 10.7 A7 5.6 0 0 1 120.6 13.6Z" fill="#f06a30"/>
<path d="M114.5 16.3 L120.6 13.6 A7 5.6 0 0 1 121.5 16.2Z" fill="#50c060"/>
</svg>
<svg class="a" style="left:822px;top:0px" width="7" height="26" shape-rendering="crispEdges"><rect x="4" y="1" width="1" height="1" fill="#777"/><rect x="5" y="1" width="1" height="1" fill="#fff"/><rect x="3" y="2" width="1" height="1" fill="#777"/><rect x="4" y="2" width="1" height="1" fill="#fff"/><rect x="2" y="3" width="1" height="1" fill="#777"/><rect x="3" y="3" width="1" height="1" fill="#fff"/><rect x="1" y="4" width="1" height="1" fill="#777"/><rect x="2" y="4" width="1" height="1" fill="#fff"/><rect x="4" y="6" width="1" height="1" fill="#777"/><rect x="5" y="6" width="1" height="1" fill="#fff"/><rect x="3" y="7" width="1" height="1" fill="#777"/><rect x="4" y="7" width="1" height="1" fill="#fff"/><rect x="2" y="8" width="1" height="1" fill="#777"/><rect x="3" y="8" width="1" height="1" fill="#fff"/><rect x="1" y="9" width="1" height="1" fill="#777"/><rect x="2" y="9" width="1" height="1" fill="#fff"/><rect x="4" y="11" width="1" height="1" fill="#777"/><rect x="5" y="11" width="1" height="1" fill="#fff"/><rect x="3" y="12" width="1" height="1" fill="#777"/><rect x="4" y="12" width="1" height="1" fill="#fff"/><rect x="2" y="13" width="1" height="1" fill="#777"/><rect x="3" y="13" width="1" height="1" fill="#fff"/><rect x="1" y="14" width="1" height="1" fill="#777"/><rect x="2" y="14" width="1" height="1" fill="#fff"/><rect x="4" y="16" width="1" height="1" fill="#777"/><rect x="5" y="16" width="1" height="1" fill="#fff"/><rect x="3" y="17" width="1" height="1" fill="#777"/><rect x="4" y="17" width="1" height="1" fill="#fff"/><rect x="2" y="18" width="1" height="1" fill="#777"/><rect x="3" y="18" width="1" height="1" fill="#fff"/><rect x="1" y="19" width="1" height="1" fill="#777"/><rect x="2" y="19" width="1" height="1" fill="#fff"/><rect x="4" y="21" width="1" height="1" fill="#777"/><rect x="5" y="21" width="1" height="1" fill="#fff"/><rect x="3" y="22" width="1" height="1" fill="#777"/><rect x="4" y="22" width="1" height="1" fill="#fff"/><rect x="2" y="23" width="1" height="1" fill="#777"/><rect x="3" y="23" width="1" height="1" fill="#fff"/><rect x="1" y="24" width="1" height="1" fill="#777"/><rect x="2" y="24" width="1" height="1" fill="#fff"/></svg>
<svg class="a" style="left:831px;top:2px" width="23" height="23"><defs><radialGradient id="rg" cx="40%" cy="35%" r="65%"><stop offset="0" stop-color="#ff8080"/><stop offset="0.45" stop-color="#dc1010"/><stop offset="1" stop-color="#8a0000"/></radialGradient></defs><circle cx="11" cy="11" r="10.2" fill="url(#rg)" stroke="#1a0000" stroke-width="1"/><path d="M9 4.5 H13 L12 14 H10Z" fill="#f4b0b0" opacity="0.85"/><rect x="10" y="15.5" width="2.4" height="2.6" fill="#f4b0b0" opacity="0.85"/></svg>
<div class="t" style="left:858px;top:5px;font:normal 13.6px 'Liberation Sans',sans-serif;color:#000;">Wed Jan 10,&nbsp; 5:42 PM</div>
<svg class="a" style="left:996px;top:2px" width="18" height="22"><defs><linearGradient id="spk" x1="0" y1="0" x2="1" y2="0"><stop offset="0" stop-color="#c8c8c8"/><stop offset="0.45" stop-color="#f4f4f4"/><stop offset="1" stop-color="#777"/></linearGradient></defs><path d="M2.6 10 Q2.6 6.8 5.2 6 L9.5 2.6 Q14.6 1.4 14.6 10.5 Q14.6 19.6 9.8 18.4 L5.2 14.6 Q2.6 13.6 2.6 10Z" fill="url(#spk)" stroke="#3a3a3a" stroke-width="1.1"/><ellipse cx="11.2" cy="10.4" rx="2.6" ry="7.2" fill="#b8b8b8" opacity="0.6"/><ellipse cx="11.6" cy="10.6" rx="1" ry="2.4" fill="#f0f0f0" opacity="0.8"/></svg>
<div class="a" style="left:0px;top:743px;width:1024px;height:25px;background:#e6e6e6"></div>
<div class="a" style="left:0px;top:743px;width:1024px;height:1px;background:#fcfcfc"></div>
<div class="a" style="left:0px;top:744px;width:31px;height:24px;background:#e6e6e6;border:1px solid #6a6a6a"></div>
<div class="a" style="left:1px;top:745px;width:29px;height:22px;border-top:1px solid #fff;border-left:1px solid #fff"></div>
<svg class="a" style="left:5px;top:748px" width="22" height="18"><path d="M2 10 Q3 9 8 8 L18 11.5 L11 16 Q6 16 2 12Z" fill="#c8a050" stroke="#6a5a38" stroke-width="0.8"/><path d="M7 5.5 L14 2 L20 6.5 L13 10Z" fill="#f0f0f0" stroke="#777" stroke-width="0.7"/><path d="M8.5 5.8 L14 3 L17 5.5 L11.5 8.5Z" fill="#2070e0"/><path d="M13 7.5 L17 5.5 L19.5 7 L15 9.5Z" fill="#30b040"/><path d="M4 13 L9 15 L7.5 17 L3 15Z" fill="#d8d8d8"/></svg>
<svg class="a" style="left:33px;top:745px" width="7" height="22" shape-rendering="crispEdges"><rect x="4" y="2" width="1" height="1" fill="#888"/><rect x="5" y="2" width="1" height="1" fill="#fff"/><rect x="3" y="3" width="1" height="1" fill="#888"/><rect x="4" y="3" width="1" height="1" fill="#fff"/><rect x="2" y="4" width="1" height="1" fill="#888"/><rect x="3" y="4" width="1" height="1" fill="#fff"/><rect x="1" y="5" width="1" height="1" fill="#888"/><rect x="2" y="5" width="1" height="1" fill="#fff"/><rect x="4" y="7" width="1" height="1" fill="#888"/><rect x="5" y="7" width="1" height="1" fill="#fff"/><rect x="3" y="8" width="1" height="1" fill="#888"/><rect x="4" y="8" width="1" height="1" fill="#fff"/><rect x="2" y="9" width="1" height="1" fill="#888"/><rect x="3" y="9" width="1" height="1" fill="#fff"/><rect x="1" y="10" width="1" height="1" fill="#888"/><rect x="2" y="10" width="1" height="1" fill="#fff"/><rect x="4" y="12" width="1" height="1" fill="#888"/><rect x="5" y="12" width="1" height="1" fill="#fff"/><rect x="3" y="13" width="1" height="1" fill="#888"/><rect x="4" y="13" width="1" height="1" fill="#fff"/><rect x="2" y="14" width="1" height="1" fill="#888"/><rect x="3" y="14" width="1" height="1" fill="#fff"/><rect x="1" y="15" width="1" height="1" fill="#888"/><rect x="2" y="15" width="1" height="1" fill="#fff"/><rect x="4" y="17" width="1" height="1" fill="#888"/><rect x="5" y="17" width="1" height="1" fill="#fff"/><rect x="3" y="18" width="1" height="1" fill="#888"/><rect x="4" y="18" width="1" height="1" fill="#fff"/><rect x="2" y="19" width="1" height="1" fill="#888"/><rect x="3" y="19" width="1" height="1" fill="#fff"/><rect x="1" y="20" width="1" height="1" fill="#888"/><rect x="2" y="20" width="1" height="1" fill="#fff"/></svg>
<div class="a" style="left:41px;top:744px;width:149px;height:24px;background:#e6e6e6;border:1px solid #6a6a6a"></div>
<div class="a" style="left:42px;top:745px;width:147px;height:22px;border-top:1px solid #fff;border-left:1px solid #fff"></div>
<svg class="a" style="left:45px;top:749px" width="16" height="14"><defs><linearGradient id="bz1" x1="0" y1="0" x2="0" y2="1"><stop offset="0" stop-color="#d0c8b8"/><stop offset="1" stop-color="#6a6458"/></linearGradient><linearGradient id="sc1" x1="0" y1="0" x2="1" y2="1"><stop offset="0" stop-color="#7a8680"/><stop offset="1" stop-color="#2a3230"/></linearGradient></defs><rect x="0.5" y="0.5" width="14.5" height="12.5" rx="1.5" fill="url(#bz1)" stroke="#3a3a34" stroke-width="0.8"/><rect x="2.5" y="2.5" width="10.5" height="7.5" fill="url(#sc1)" stroke="#111" stroke-width="0.8"/><path d="M4 8.5 H6" stroke="#dde" stroke-width="1"/></svg>
<div class="t" style="left:64px;top:748px;font:normal 13px 'Liberation Sans',sans-serif;color:#000;">delphine@localhost:~</div>
<div class="a" style="left:190px;top:744px;width:149px;height:24px;background:#d4d4d4;border:1px solid #6a6a6a"></div>
<div class="a" style="left:191px;top:745px;width:147px;height:22px;border-right:1px solid #fff;border-bottom:1px solid #fff"></div>
<svg class="a" style="left:194px;top:748px" width="15" height="17"><defs><linearGradient id="pg" x1="0" y1="0" x2="1" y2="1"><stop offset="0" stop-color="#fff"/><stop offset="1" stop-color="#d0d0d0"/></linearGradient></defs><path d="M0.6 0.6 H11.5 L13.6 2.7 V15.4 H0.6Z" fill="url(#pg)" stroke="#333" stroke-width="1.1"/></svg>
<div class="t" style="left:213px;top:748px;font:normal 13px 'Liberation Sans',sans-serif;color:#000;">KWMeshVisu</div>
<div class="a" style="left:339px;top:744px;width:150px;height:24px;background:#e6e6e6;border:1px solid #6a6a6a"></div>
<div class="a" style="left:340px;top:745px;width:148px;height:22px;border-top:1px solid #fff;border-left:1px solid #fff"></div>
<svg class="a" style="left:342px;top:749px" width="16" height="14"><defs><linearGradient id="bz2" x1="0" y1="0" x2="0" y2="1"><stop offset="0" stop-color="#d0c8b8"/><stop offset="1" stop-color="#6a6458"/></linearGradient><linearGradient id="sc2" x1="0" y1="0" x2="1" y2="1"><stop offset="0" stop-color="#7a8680"/><stop offset="1" stop-color="#2a3230"/></linearGradient></defs><rect x="0.5" y="0.5" width="14.5" height="12.5" rx="1.5" fill="url(#bz2)" stroke="#3a3a34" stroke-width="0.8"/><rect x="2.5" y="2.5" width="10.5" height="7.5" fill="url(#sc2)" stroke="#111" stroke-width="0.8"/><path d="M4 8.5 H6" stroke="#dde" stroke-width="1"/></svg>
<div class="t" style="left:362px;top:748px;font:normal 13px 'Liberation Sans',sans-serif;color:#000;">delphine@localhost:~</div>
<div class="a" style="left:914px;top:745px;width:110px;height:22px;background:#a2a2a2;border:1px solid #8a8a8a"></div>
<div class="a" style="left:914px;top:745px;width:27px;height:22px;background:#2e3e6a"></div>
<div class="a" style="left:917px;top:747px;width:23px;height:17px;background:#4a68b0;border:1px solid #fff"></div>
<div class="a" style="left:915px;top:747px;width:2px;height:11px;background:#000"></div>
<div class="a" style="left:941px;top:746px;width:1px;height:20px;background:#f0f0f0"></div>
<div class="a" style="left:968px;top:746px;width:1px;height:20px;background:#f0f0f0"></div>
<div class="a" style="left:995px;top:746px;width:1px;height:20px;background:#f0f0f0"></div>
</body></html>
